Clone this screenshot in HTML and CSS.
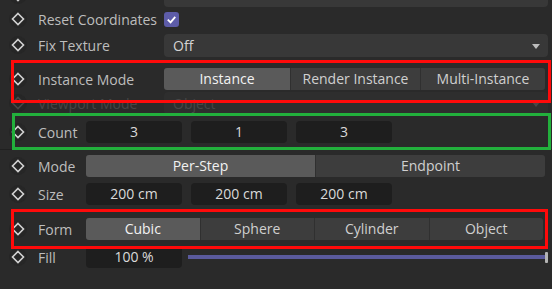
FILE: index.html
```html
<!DOCTYPE html>
<html lang="en">
<head>
  <meta charset="UTF-8">
  <title>Cloner Attributes</title>
  <link rel="stylesheet" href="styles.css">
</head>
<body>
  <div class="panel">
    <div class="row row-top">
      <span class="key"><svg viewBox="0 0 20 20"><circle cx="10" cy="10" r="9"/><path d="M10 4.5 L15.5 10 L10 15.5 L4.5 10 Z"/></svg></span>
      <span class="label wide"></span>
      <div class="dropdown"></div>
    </div>
    <div class="row">
      <span class="key"><svg viewBox="0 0 20 20"><circle cx="10" cy="10" r="9"/><path d="M10 4.5 L15.5 10 L10 15.5 L4.5 10 Z"/></svg></span>
      <span class="label wide">Reset Coordinates</span>
      <span class="checkbox"><svg viewBox="0 0 16 16"><path d="M4 8.2 L7 11 L12 5.2"/></svg></span>
    </div>
    <div class="row gap-xs">
      <span class="key"><svg viewBox="0 0 20 20"><circle cx="10" cy="10" r="9"/><path d="M10 4.5 L15.5 10 L10 15.5 L4.5 10 Z"/></svg></span>
      <span class="label wide">Fix Texture</span>
      <div class="dropdown">Off<i class="arrow"></i></div>
    </div>
    <div class="row gap-l mark mark-instance">
      <span class="key"><svg viewBox="0 0 20 20"><circle cx="10" cy="10" r="9"/><path d="M10 4.5 L15.5 10 L10 15.5 L4.5 10 Z"/></svg></span>
      <span class="label wide">Instance Mode</span>
      <div class="seg seg-instance">
        <span class="active">Instance</span>
        <span>Render Instance</span>
        <span>Multi-Instance</span>
      </div>
    </div>
    <div class="row disabled">
      <span class="key"><svg viewBox="0 0 20 20"><circle cx="10" cy="10" r="9"/><path d="M10 4.5 L15.5 10 L10 15.5 L4.5 10 Z"/></svg></span>
      <span class="label wide">Viewport Mode</span>
      <div class="dropdown">Object<i class="arrow"></i></div>
    </div>
    <div class="row gap-m mark mark-count">
      <span class="key"><svg viewBox="0 0 20 20"><circle cx="10" cy="10" r="9"/><path d="M10 4.5 L15.5 10 L10 15.5 L4.5 10 Z"/></svg></span>
      <span class="label">Count</span>
      <div class="fields">
        <span class="num">3</span>
        <span class="num">1</span>
        <span class="num">3</span>
      </div>
    </div>
    <div class="separator"></div>
    <div class="row gap-l">
      <span class="key"><svg viewBox="0 0 20 20"><circle cx="10" cy="10" r="9"/><path d="M10 4.5 L15.5 10 L10 15.5 L4.5 10 Z"/></svg></span>
      <span class="label">Mode</span>
      <div class="seg seg-two">
        <span class="active">Per-Step</span>
        <span>Endpoint</span>
      </div>
    </div>
    <div class="row gap-s">
      <span class="key"><svg viewBox="0 0 20 20"><circle cx="10" cy="10" r="9"/><path d="M10 4.5 L15.5 10 L10 15.5 L4.5 10 Z"/></svg></span>
      <span class="label">Size</span>
      <div class="fields">
        <span class="num">200 cm</span>
        <span class="num">200 cm</span>
        <span class="num">200 cm</span>
      </div>
    </div>
    <div class="row gap-l2 mark mark-form">
      <span class="key"><svg viewBox="0 0 20 20"><circle cx="10" cy="10" r="9"/><path d="M10 4.5 L15.5 10 L10 15.5 L4.5 10 Z"/></svg></span>
      <span class="label">Form</span>
      <div class="seg seg-four">
        <span class="active">Cubic</span>
        <span>Sphere</span>
        <span>Cylinder</span>
        <span>Object</span>
      </div>
    </div>
    <div class="row gap-s">
      <span class="key"><svg viewBox="0 0 20 20"><circle cx="10" cy="10" r="9"/><path d="M10 4.5 L15.5 10 L10 15.5 L4.5 10 Z"/></svg></span>
      <span class="label">Fill</span>
      <span class="num">100 %</span>
      <div class="slider"><span class="handle"></span></div>
    </div>
  </div>
</body>
</html>
```

FILE: styles.css
```css
body {
  margin: 0;
  background: #2a2a2a;
  font-family: "Open Sans", "Noto Sans", sans-serif;
  font-size: 14px;
  color: #bdbdbd;
  overflow: hidden;
}
.panel {
  display: flex;
  flex-direction: column;
  margin-top: -17px;
}
.row {
  display: flex;
  align-items: center;
  height: 24px;
  position: relative;
}
.gap-xs { margin-top: 2px; }
.gap-s { margin-top: 4px; }
.gap-m { margin-top: 5px; }
.gap-l { margin-top: 10px; }
.gap-l2 { margin-top: 11px; }
.key {
  width: 36px;
  flex: none;
  display: flex;
  justify-content: center;
}
.key svg {
  width: 20px;
  height: 20px;
}
.key circle {
  fill: #262626;
}
.key path {
  fill: none;
  stroke: #d2d2d2;
  stroke-width: 1.6;
}
.label {
  width: 48px;
  margin-left: 2px;
  flex: none;
  white-space: nowrap;
}
.label.wide {
  width: 126px;
}
.dropdown {
  flex: 1;
  margin-right: 4px;
  height: 23px;
  line-height: 23px;
  background: #383838;
  border-radius: 4px;
  padding-left: 9px;
  color: #d4d4d4;
  position: relative;
}
.arrow {
  position: absolute;
  right: 8px;
  top: 10px;
  border-left: 4.5px solid transparent;
  border-right: 4.5px solid transparent;
  border-top: 5px solid #bdbdbd;
}
.checkbox {
  width: 15px;
  height: 15px;
  border-radius: 3px;
  background: #5d5ca8;
  display: flex;
}
.checkbox svg {
  width: 15px;
  height: 15px;
}
.checkbox path {
  fill: none;
  stroke: #fff;
  stroke-width: 2;
}
.disabled {
  color: #464646;
}
.disabled .key path {
  stroke: #474747;
}
.disabled .dropdown {
  background: #2e2e2e;
  color: #474747;
}
.disabled .arrow {
  border-top-color: #474747;
}
.seg {
  flex: 1;
  display: grid;
  gap: 1px;
  height: 22px;
  margin-right: 7px;
  background: #303030;
  border-radius: 3px;
  overflow: hidden;
}
.seg span {
  background: #3d3d3d;
  color: #d0d0d0;
  text-align: center;
  line-height: 22px;
  white-space: nowrap;
}
.seg span.active {
  background: #5a5a5a;
  color: #f2f2f2;
}
.seg-instance { grid-template-columns: 126px 129px 1fr; }
.seg-two { grid-template-columns: 1fr 1fr; }
.seg-four {
  grid-template-columns: repeat(4, 1fr);
  margin-right: 9px;
}
.fields {
  display: flex;
  gap: 9px;
}
.num {
  width: 96px;
  height: 22px;
  line-height: 22px;
  background: #1e1e1e;
  border-radius: 4px;
  color: #dadada;
  text-align: center;
  flex: none;
}
.slider {
  flex: 1;
  margin: 0 6px 0 6px;
  height: 4px;
  background: #5a5a9c;
  position: relative;
}
.handle {
  position: absolute;
  right: -2px;
  top: -3px;
  width: 3px;
  height: 11px;
  background: #b4b4b4;
  border-radius: 1px;
}
.separator {
  height: 1px;
  background: #202020;
  margin-top: 5px;
  margin-bottom: -6px;
}
.mark::after {
  content: "";
  position: absolute;
  border: 3px solid #ff0a0a;
  z-index: 2;
  pointer-events: none;
}
.mark-instance::after {
  top: -7px;
  bottom: -12px;
  left: 11px;
  right: 1px;
}
.mark-count::after {
  top: -7px;
  bottom: -6px;
  left: 12px;
  right: 1px;
  border-color: #22b03c;
}
.mark-form::after {
  top: -8px;
  bottom: -8px;
  left: 11px;
  right: 4px;
}
```
